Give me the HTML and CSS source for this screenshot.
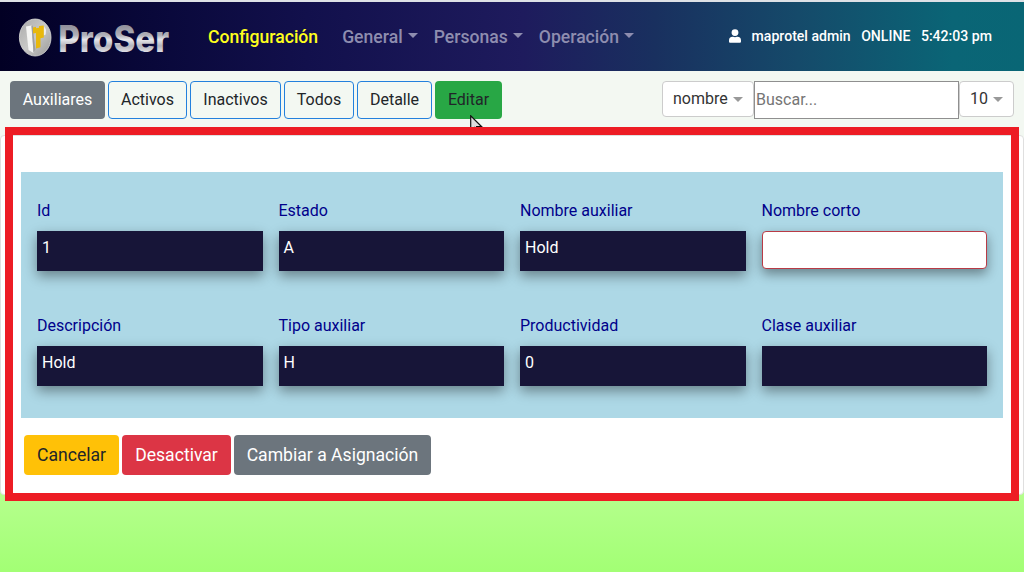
FILE: index.html
```html
<!DOCTYPE html>
<html lang="es">
<head>
<meta charset="utf-8">
<title>ProSer - Auxiliares</title>
<link rel="stylesheet" href="styles.css">
</head>
<body>
<nav class="navbar">
  <a class="brand" aria-label="ProSer">
    <svg width="160" height="54" viewBox="0 -5 160 54">
      <defs>
        <linearGradient id="metal" gradientUnits="userSpaceOnUse" x1="0" y1="9" x2="0" y2="37">
          <stop offset="0" stop-color="#8c8c96"/><stop offset="0.4" stop-color="#b0b0b8"/>
          <stop offset="0.56" stop-color="#e6e6ea"/><stop offset="0.78" stop-color="#b4b4bc"/><stop offset="1" stop-color="#dedee4"/>
        </linearGradient>
        <linearGradient id="disc" x1="0" y1="0" x2="1" y2="1">
          <stop offset="0" stop-color="#aaa"/><stop offset="0.5" stop-color="#c9c9c7"/><stop offset="1" stop-color="#999"/>
        </linearGradient>
      </defs>
      <ellipse cx="17.200" cy="22.500" rx="15.800" ry="18.500" fill="url(#disc)" stroke="#dededb" stroke-width="0.800"/>
      <path d="M8 11.500l5.500-1 2 27.500-5-3z" fill="#f5f5f3"/>
      <path d="M13.500 11l1.200-.5 2.600 24-1.800 3z" fill="#a0a09e"/>
      <path d="M25.500 10.500l2.500 4-.3 5-2.200 1z" fill="#eee"/>
      <path d="M15 12.500l3-.8v1.600l3-.6v-1.600l4.800-.5v12l-3.300.6v9l-4.500 1.300V18l-3 .5z" fill="#e8b80c"/>
      <text class="brand-text" x="40.200" y="36.500" textLength="111" lengthAdjust="spacingAndGlyphs" fill="url(#metal)">ProSer</text>
    </svg>
  </a>
  <div class="menu">
    <a class="menu-item active">Configuración</a>
    <a class="menu-item caret">General</a>
    <a class="menu-item caret">Personas</a>
    <a class="menu-item caret">Operación</a>
  </div>
  <div class="session">
    <svg class="user-icon" width="12" height="14" viewBox="0 0 448 512"><path fill="#fff" d="M224 256A128 128 0 1 0 224 0a128 128 0 0 0 0 256zm90 32h-17a174 174 0 0 1-146 0h-17A134 134 0 0 0 0 422v42c0 26 21 48 48 48h352c27 0 48-22 48-48v-42a134 134 0 0 0-134-134z"/></svg>
    <span>maprotel admin</span><span>ONLINE</span><span>5:42:03 pm</span>
  </div>
</nav>
<div class="toolbar">
  <div class="filters">
    <button class="btn secondary w-aux">Auxiliares</button>
    <button class="btn outline w-act">Activos</button>
    <button class="btn outline w-ina">Inactivos</button>
    <button class="btn outline w-tod">Todos</button>
    <button class="btn outline w-det">Detalle</button>
    <button class="btn success w-edi">Editar
      <svg class="pointer" width="14" height="20" viewBox="0 0 14 20"><path d="M.7.800v15l3.600-3.300 2.500 6 2.500-1-2.600-5.800h5z" fill="#ddd" stroke="#111" stroke-width="1.200"/></svg>
    </button>
  </div>
  <div class="search">
    <div class="select w-field">nombre</div>
    <input class="search-box" placeholder="Buscar...">
    <div class="select w-count">10</div>
  </div>
</div>
<main class="card">
  <section class="highlight">
    <div class="fields">
      <div class="field"><label>Id</label><div class="value">1</div></div>
      <div class="field"><label>Estado</label><div class="value">A</div></div>
      <div class="field"><label>Nombre auxiliar</label><div class="value">Hold</div></div>
      <div class="field"><label>Nombre corto</label><input class="edit"></div>
      <div class="field"><label>Descripción</label><div class="value">Hold</div></div>
      <div class="field"><label>Tipo auxiliar</label><div class="value">H</div></div>
      <div class="field"><label>Productividad</label><div class="value">0</div></div>
      <div class="field"><label>Clase auxiliar</label><div class="value"></div></div>
    </div>
    <div class="actions">
      <button class="btn large warning w-can">Cancelar</button>
      <button class="btn large danger w-des">Desactivar</button>
      <button class="btn large secondary w-cam">Cambiar a Asignación</button>
    </div>
  </section>
</main>
</body>
</html>
```
FILE: styles.css
```css
* { box-sizing: border-box; }
body {
  margin: 0;
  height: 572px;
  overflow: hidden;
  border-top: 2px solid #dee1e6;
  font: 16px/24px Roboto, sans-serif;
  color: #212529;
  background: linear-gradient(#f3f8f2 0, #f3f8f2 133px, #b8ff91 480px, #a3ff75 570px);
}
.navbar {
  height: 69px;
  display: flex;
  align-items: center;
  padding: 0 32px 0 18px;
  background: linear-gradient(90deg, #020024 0%, #09083a 15%, #12104c 30%, #1e1b5d 51%, #19305f 64%, #154a6a 78%, #0a6576 93%, #096675 100%);
}
.brand { width: 190px; }
.brand svg { display: block; overflow: visible; }
.brand-text { font: 800 37px Inter, sans-serif; }
.menu { display: flex; gap: 16px; font-size: 17.6px; font-weight: 500; }
.menu-item { color: #8e8daf; white-space: nowrap; }
.active { color: #ffff1c; margin-right: 8px; }
.caret::after {
  content: "";
  display: inline-block;
  margin-left: 5px;
  vertical-align: 5px;
  border: 5.3px solid transparent;
  border-top-color: currentColor;
  border-bottom: 0;
}
.session { display: flex; align-items: center; gap: 10.5px; margin: -2px 0 0 auto; color: #fff; font-size: 14.08px; font-weight: 500; white-space: nowrap; }
.toolbar { height: 64px; padding: 10px 10px 0; display: flex; justify-content: space-between; align-items: flex-start; }
.filters { display: flex; gap: 3px; }
.btn {
  height: 38px;
  padding: 0;
  border: 1px solid transparent;
  border-radius: 4px;
  font: 16px/24px Roboto, sans-serif;
  color: #212529;
  background: transparent;
  white-space: nowrap;
}
.outline { border-color: #2380dd; }
.secondary { background: #6c757d; color: #fff; }
.success { background: #28a745; position: relative; }
.warning { background: #ffc107; }
.danger { background: #dc3545; color: #fff; }
.w-aux { width: 95px; }
.w-act { width: 79px; }
.w-ina { width: 91px; }
.w-tod { width: 70px; }
.w-det { width: 75px; }
.w-edi { width: 67px; }
.pointer { position: absolute; left: 34px; top: 33px; }
.search { display: flex; align-items: flex-start; }
.select {
  height: 36px;
  display: flex;
  align-items: center;
  gap: 5px;
  padding-left: 10px;
  border: 1px solid #ccc;
  border-radius: 4px;
  background: #fff;
  color: #333;
}
.select::after { content: ""; border: 5px solid transparent; border-top-color: #999; border-bottom: 0; margin-top: 1px; }
.w-field { width: 92px; }
.w-count { width: 55px; }
.search-box { width: 205px; height: 38px; padding: 0 1px 2px; border: 1px solid #8f8f8f; font: 16px Roboto, sans-serif; }
.search-box::placeholder { color: #757575; }
.card { height: 360px; border: 1px solid #dfdfdf; border-radius: 4px; background: #fff; }
.highlight {
  position: relative;
  height: 374px;
  margin: -9px 4px 0;
  padding: 37px 8px 0;
  border: 8px solid #ed1c24;
}
.fields {
  height: 246px;
  padding: 27px 16px 0;
  display: grid;
  grid-template-columns: repeat(4, 1fr);
  grid-auto-rows: 115px;
  column-gap: 16px;
  background: #add8e6;
}
.field { display: flex; flex-direction: column; gap: 8px; }
.field label { color: #00008b; }
.value, .edit { width: 100%; box-shadow: 0 5px 12px rgba(0, 0, 0, .4); }
.value { height: 40px; padding: 5px; background: #171538; color: #fff; }
.edit { height: 38px; border: 1px solid #b83b46; border-radius: 4px; background: #fff; }
.actions { display: flex; gap: 3px; padding: 17px 3px 0; }
.large { height: 40px; font-size: 17.6px; }
.w-can { width: 95px; }
.w-des { width: 109px; }
.w-cam { width: 197px; }
```
